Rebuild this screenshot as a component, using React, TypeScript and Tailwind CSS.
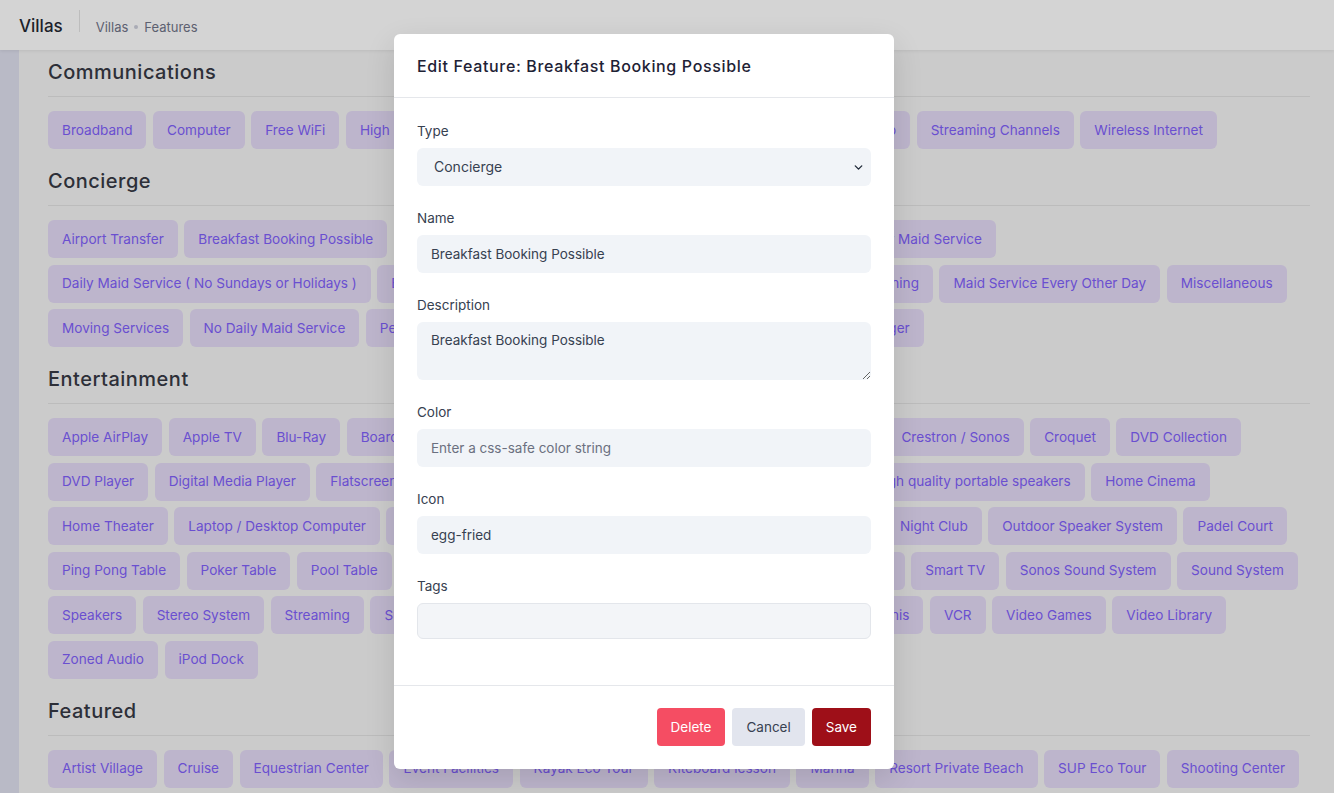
import { ChevronDown } from 'lucide-react'

const sections: { title: string; tags: string[] }[] = [
  {
    title: 'Communications',
    tags: [
      'Broadband',
      'Computer',
      'Free WiFi',
      'High Speed Internet',
      'International Calls',
      'Landline Phone',
      'Satellite Radio',
      'Streaming Channels',
      'Wireless Internet',
    ],
  },
  {
    title: 'Concierge',
    tags: [
      'Airport Transfer',
      'Breakfast Booking Possible',
      'Butler Service',
      'Car Rental Assistance',
      'Childcare Services',
      'Daily Maid Service',
      'Daily Maid Service ( No Sundays or Holidays )',
      'Evening Turn-Down Service',
      'Groceries Pre-Stocking',
      'Laundry and Ironing',
      'Maid Service Every Other Day',
      'Miscellaneous',
      'Moving Services',
      'No Daily Maid Service',
      'Personal Chef',
      'Personal Shopper',
      'Personal Trainer',
      'Property Manager',
    ],
  },
  {
    title: 'Entertainment',
    tags: [
      'Apple AirPlay',
      'Apple TV',
      'Blu-Ray',
      'Board Game',
      'Book Swap',
      'Cable TV',
      'Card Games',
      'Chromecast',
      'Crestron / Sonos',
      'Croquet',
      'DVD Collection',
      'DVD Player',
      'Digital Media Player',
      'Flatscreen TV',
      'Foosball Table',
      'Games Console',
      'Games Room & Bar',
      'High quality portable speakers',
      'Home Cinema',
      'Home Theater',
      'Laptop / Desktop Computer',
      'Library',
      'Media Room & Bar',
      'Movie Projector',
      'Music Systems',
      'Night Club',
      'Outdoor Speaker System',
      'Padel Court',
      'Ping Pong Table',
      'Poker Table',
      'Pool Table',
      'Projector Screen',
      'Record Player',
      'Satellite TV',
      'Screening Room',
      'Smart TV',
      'Sonos Sound System',
      'Sound System',
      'Speakers',
      'Stereo System',
      'Streaming',
      'Surround Sound System',
      'TV',
      'Table Football',
      'Table Tennis',
      'Tennis',
      'VCR',
      'Video Games',
      'Video Library',
      'Zoned Audio',
      'iPod Dock',
    ],
  },
  {
    title: 'Featured',
    tags: [
      'Artist Village',
      'Cruise',
      'Equestrian Center',
      'Event Facilities',
      'Kayak Eco Tour',
      'Kiteboard lesson',
      'Marina',
      'Resort Private Beach',
      'SUP Eco Tour',
      'Shooting Center',
    ],
  },
]

function Field({ label, children }: { label: string; children: React.ReactNode }) {
  return (
    <div className="mb-[22px]">
      <label className="block text-[13.5px] leading-5 text-[#374151] mb-[7px]">{label}</label>
      {children}
    </div>
  )
}

export default function App() {
  return (
    <div
      className="relative h-[793px] overflow-hidden bg-[#cbcbcb]"
      style={{ fontFamily: 'Inter, "Noto Sans", sans-serif' }}
    >
      {/* top bar */}
      <div className="relative z-10 h-[50px] bg-[#d4d4d4] flex items-start shadow-[0_1px_3px_rgba(0,0,0,0.08)]">
        <div className="pl-[19px] pr-4 pt-[14px] text-[17px] leading-6 font-medium text-[#1c1f2b]">Villas</div>
        <div className="mt-[10px] h-[22px] w-px bg-[#bdbdbd]" />
        <div className="pl-4 pt-[17px] flex items-center gap-[6px] text-[13px] leading-5 text-[#5c6070]">
          <span>Villas</span>
          <span className="w-[4px] h-[4px] rounded-full bg-[#a9abb5]" />
          <span>Features</span>
        </div>
      </div>

      <div className="flex h-[743px]">
        <div className="w-[19px] shrink-0 bg-[#b9bac6]" />
        <div className="flex-1 pl-[29px] pr-[24px] pt-2">
          {sections.map((section) => (
            <div key={section.title} className="mb-[18px]">
              <h2 className="text-xl leading-7 font-medium tracking-[0.5px] text-[#2d2f38]">{section.title}</h2>
              <div className="mt-[10px] mb-[14px] border-t border-[#bcbcbc]" />
              <div className="flex flex-wrap gap-x-[6.5px] gap-y-[6.5px]">
                {section.tags.map((tag) => (
                  <span
                    key={tag}
                    className="h-[38px] px-[14px] flex items-center rounded-md bg-[#bdb5cc] text-[13.6px] text-[#6a4fd0] whitespace-nowrap"
                  >
                    {tag}
                  </span>
                ))}
              </div>
            </div>
          ))}
        </div>
      </div>

      {/* edit modal */}
      <div className="absolute z-20 left-[394px] top-[34px] w-[500px] bg-white rounded-md shadow-[0_10px_30px_rgba(0,0,0,0.12)]">
        <div className="h-[64px] px-[23px] flex items-center border-b border-[#e5e7eb]">
          <h3 className="text-base font-medium tracking-[0.65px] text-[#1e2235]">
            Edit Feature: Breakfast Booking Possible
          </h3>
        </div>

        <div className="px-[23px] pt-[23px] pb-[24px]">
          <Field label="Type">
            <div className="relative">
              <select
                defaultValue="Concierge"
                className="w-full h-[38px] appearance-none rounded-md bg-[#f1f4f8] pl-[17px] text-sm text-[#374151] outline-none"
              >
                <option>Communications</option>
                <option>Concierge</option>
                <option>Entertainment</option>
                <option>Featured</option>
              </select>
              <ChevronDown
                className="pointer-events-none absolute right-[6px] top-[13px] w-[13px] h-[13px] text-[#1f2937]"
                strokeWidth={2.5}
              />
            </div>
          </Field>
          <Field label="Name">
            <input
              defaultValue="Breakfast Booking Possible"
              className="w-full h-[38px] rounded-md bg-[#f1f4f8] px-[14px] text-[13.5px] text-[#374151] outline-none"
            />
          </Field>
          <Field label="Description">
            <textarea
              defaultValue="Breakfast Booking Possible"
              className="block w-full h-[58px] rounded-md bg-[#f1f4f8] px-[14px] py-[8px] text-[13.5px] leading-5 text-[#374151] outline-none"
            />
          </Field>
          <Field label="Color">
            <input
              placeholder="Enter a css-safe color string"
              className="w-full h-[38px] rounded-md bg-[#f1f4f8] px-[14px] text-[13.5px] text-[#374151] placeholder:text-[#6b7080] outline-none"
            />
          </Field>
          <Field label="Icon">
            <input
              defaultValue="egg-fried"
              className="w-full h-[38px] rounded-md bg-[#f1f4f8] px-[14px] text-[13.5px] text-[#374151] outline-none"
            />
          </Field>
          <Field label="Tags">
            <div className="h-[36px] rounded-md bg-[#f3f5f8] border border-[#e3e6eb]" />
          </Field>
        </div>

        <div className="border-t border-[#e5e7eb] px-[23px] pt-[22px] pb-[23px] flex justify-end gap-[7px]">
          <button className="h-[38px] px-[14px] rounded bg-[#f54d63] text-[13.5px] text-white">Delete</button>
          <button className="h-[38px] px-[14px] rounded bg-[#e2e5ee] text-[13.5px] text-[#374151]">Cancel</button>
          <button className="h-[38px] px-[14px] rounded bg-[#9e0f18] text-[13.5px] text-white">Save</button>
        </div>
      </div>
    </div>
  )
}
